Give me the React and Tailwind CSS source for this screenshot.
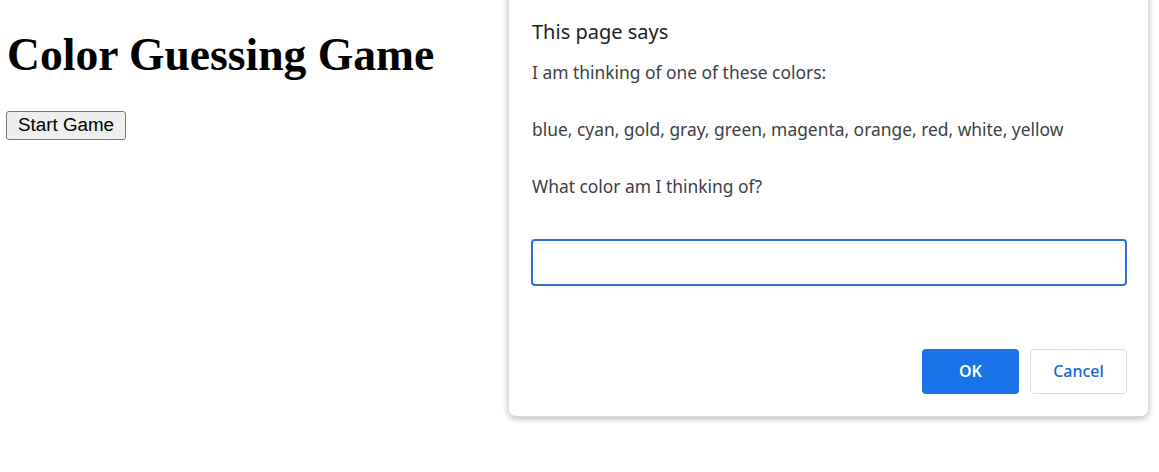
export default function App() {
  return (
    <div className="relative w-[1159px] h-[472px] bg-white overflow-hidden">
      {/* page */}
      <div className="pl-[6px] pt-[29px]">
        <h1 className="text-[45.6px] leading-[52px] font-bold text-black font-['Liberation_Serif',serif] ml-[1px]">
          Color Guessing Game
        </h1>
        <button className="mt-[30px] h-[29px] px-[11px] text-[18.8px] leading-none text-black bg-[#efefef] border border-[#767676] rounded-[3px] font-['Liberation_Sans',Arial,sans-serif]">
          Start Game
        </button>
      </div>

      {/* prompt dialog */}
      <div className="absolute left-[508px] top-[-20px] w-[641px] bg-white rounded-[8px] border border-[#dcdcdc] shadow-[0_2px_6px_rgba(0,0,0,0.25)] pl-[22px] pr-[21px] pt-[36px] pb-[22px] font-['Noto_Sans','Open_Sans',sans-serif]">
        <div className="pl-[1px] text-[20px] leading-[30px] text-[#202124]">This page says</div>
        <div className="pl-[1px] mt-[11px] text-[17.4px] leading-[28.5px] text-[#3c4043] whitespace-pre-line">
          {'I am thinking of one of these colors:\n\nblue, cyan, gold, gray, green, magenta, orange, red, white, yellow\n\nWhat color am I thinking of?'}
        </div>
        <input
          className="mt-[38px] block w-[596px] h-[47px] rounded-[4px] border-2 border-[#2f6fd0] outline-none px-2 text-[16px]"
          defaultValue=""
        />
        <div className="mt-[63px] flex justify-end gap-[11px]">
          <button className="w-[97px] h-[45px] rounded-[4px] bg-[#1a73e8] text-white text-[16px] font-semibold">
            OK
          </button>
          <button className="w-[97px] h-[45px] rounded-[4px] bg-white border border-[#dadce0] text-[#1a66d6] text-[16px] font-medium">
            Cancel
          </button>
        </div>
      </div>
    </div>
  );
}
